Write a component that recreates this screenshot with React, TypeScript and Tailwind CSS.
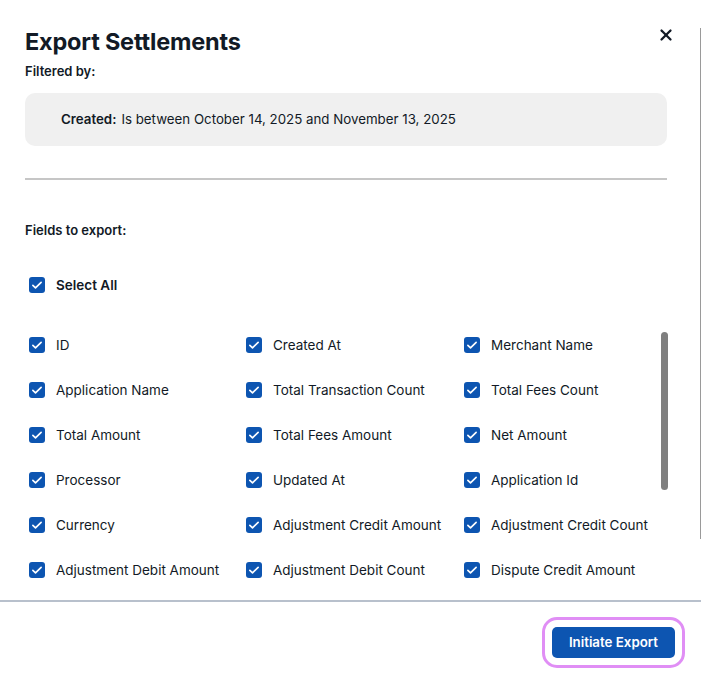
import * as React from "react"
import { X } from "lucide-react"

const fields = [
  "ID",
  "Created At",
  "Merchant Name",
  "Application Name",
  "Total Transaction Count",
  "Total Fees Count",
  "Total Amount",
  "Total Fees Amount",
  "Net Amount",
  "Processor",
  "Updated At",
  "Application Id",
  "Currency",
  "Adjustment Credit Amount",
  "Adjustment Credit Count",
  "Adjustment Debit Amount",
  "Adjustment Debit Count",
  "Dispute Credit Amount",
]

function Check() {
  return (
    <span className="w-4 h-4 rounded-[3px] bg-[#0d55b1] flex items-center justify-center shrink-0">
      <svg viewBox="0 0 16 16" className="w-3 h-3" fill="none">
        <path d="M2.5 8.5l3.5 3.3L13.5 4.5" stroke="white" strokeWidth="2.2" strokeLinecap="round" strokeLinejoin="round" />
      </svg>
    </span>
  )
}

export default function App() {
  return (
    <div className="w-[701px] h-[674px] bg-white relative overflow-hidden text-[#121a26] font-['Inter',sans-serif]">
      <div className="absolute right-0 top-[28px] h-[511px] w-px bg-[#9a9a9a]" />
      <div className="pl-[25px] pr-[34px] pt-[27px]">
        <div className="flex items-start justify-between">
          <h1 className="text-[23.5px] font-bold leading-[30px] tracking-[-0.2px]">Export Settlements</h1>
          <button className="mr-[-8px] mt-[-1px] text-[#121a26]">
            <X className="w-[18px] h-[18px]" strokeWidth={3} />
          </button>
        </div>
        <p className="mt-[6px] text-[13px] font-semibold leading-4">Filtered by:</p>
        <div className="mt-[14px] h-[53px] rounded-[10px] bg-[#f0f0f0] flex items-center pl-[36px] text-[13.3px]">
          <span className="font-semibold">Created:</span>
          <span className="ml-[5px]">Is between October 14, 2025 and November 13, 2025</span>
        </div>
        <div className="mt-[32px] h-[2px] bg-[#c6c6c6]" />
        <p className="mt-[42px] text-[13px] font-semibold leading-4">Fields to export:</p>
        <label className="mt-[39px] flex items-center gap-[11px] pl-[4px] text-[13.5px] font-semibold leading-4">
          <Check />
          Select All
        </label>
      </div>
      <div className="relative mt-[32px] h-[275px] overflow-hidden">
        <div className="grid grid-cols-[217px_218px_1fr] pl-[29px] pt-[12px] gap-y-[29px]">
          {fields.map((f) => (
            <div key={f} className="flex items-center gap-[11px] h-4 text-[13.5px] leading-4">
              <Check />
              <span>{f}</span>
            </div>
          ))}
        </div>
        <div className="absolute left-[661px] top-[7px] w-[7px] h-[158px] rounded-full bg-[#7f7f7f]" />
      </div>
      <div className="h-[2px] bg-[#b8c0cc]" />
      <div className="flex justify-end pr-[26px] pt-[25px]">
        <button className="h-[31px] px-[17px] rounded-[5px] bg-[#0d55b1] text-white text-[13.3px] font-semibold outline-[3px] outline-solid outline-offset-[7px] outline-[#e08ef5]">
          Initiate Export
        </button>
      </div>
    </div>
  )
}
